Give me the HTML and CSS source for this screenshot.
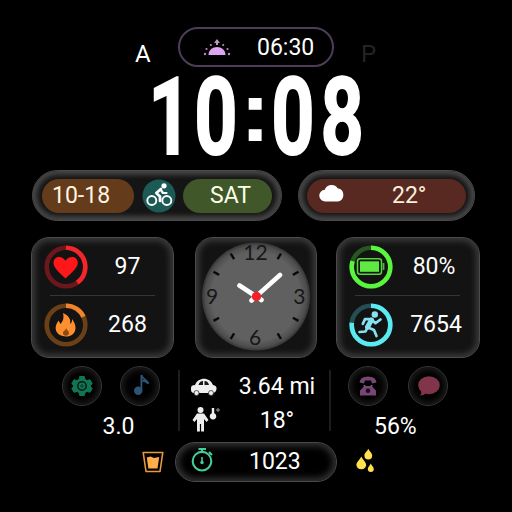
FILE: index.html
```html
<!DOCTYPE html>
<html lang="en">
<head>
<meta charset="utf-8">
<title>Watch face</title>
<link rel="stylesheet" href="styles.css">
</head>
<body>
<main class="face">
  <header class="top">
    <span class="am">A</span>
    <div class="sunrise">
      <svg class="sun" width="28" height="20" viewBox="0 0 28 20" fill="#dda4ef">
        <path d="M5.5 17C5.5 6.300 22.500 6.300 22.500 17Z"/>
        <path d="M14 1L17 5H15V7H13V5H11Z" fill="#b99abf"/>
        <g fill="#b58bc2"><circle cx="2" cy="16" r="1.2"/><circle cx="3.5" cy="11" r="1.1"/><circle cx="7.8" cy="7" r="1.1"/><circle cx="20.2" cy="7" r="1.1"/><circle cx="24.5" cy="11" r="1.1"/><circle cx="26" cy="16" r="1.2"/></g>
      </svg>
      <span>06:30</span>
    </div>
    <span class="pm">P</span>
  </header>

  <svg class="time" width="220" height="88" viewBox="146 72 220 88">
    <g class="digit">
      <text transform="translate(170 154.300) scale(.7 1)">1</text>
      <text transform="translate(216 154.300) scale(.7 1)">0</text>
      <text transform="translate(293 154.300) scale(.7 1)">0</text>
      <text transform="translate(342.200 154.300) scale(.7 1)">8</text>
    </g>
    <text class="colon" transform="translate(240 141) scale(1.060 1)">:</text>
  </svg>

  <section class="row pills">
    <div class="shell date">
      <span class="chip brown">10-18</span>
      <svg width="34" height="34" viewBox="0 0 34 34" fill="none" stroke="#fff" stroke-linecap="round" stroke-linejoin="round">
        <circle cx="17" cy="17" r="16.5" fill="#1c5b55" stroke="none"/>
        <circle cx="9.800" cy="21.500" r="4.500" stroke-width="1.900"/><circle cx="24.800" cy="21.500" r="4.500" stroke-width="1.900"/>
        <path d="M19 10L14.300 14L18 17.500V22" stroke-width="2.700"/><path d="M18.500 10.500L21 14H24.500" stroke-width="2.200"/>
        <circle cx="22" cy="6.800" r="2.600" fill="#fff" stroke="none"/>
      </svg>
      <span class="chip green">SAT</span>
    </div>
    <div class="shell weather">
      <div class="chip red">
        <svg width="26" height="20" viewBox="0 0 26 20" fill="#fff"><path d="M6.500 17.500A5.400 5.400 0 0 1 5.800 5.800A7.200 7.200 0 0 1 18.600 4.300A6.700 6.700 0 0 1 19 17.500Z"/></svg>
        <span>22°</span>
      </div>
    </div>
  </section>

  <section class="row cards">
    <div class="card">
      <div class="metric">
        <svg width="44" height="44" viewBox="0 0 44 44">
          <circle class="ring" cx="22" cy="22" r="19.3" stroke="#6b171b"/>
          <circle class="ring" cx="22" cy="22" r="19.3" pathLength="100" stroke="#f2262b" stroke-dasharray="40 60" transform="rotate(-90 22 22)"/>
          <path d="M21.5 33.5C17 29 9.5 23.5 9.5 17.8C9.5 10.7 18.5 10.2 21.5 15.8C24.5 10.2 33.8 10.7 33.8 17.8C33.8 23.5 26 29 21.5 33.5Z" fill="#fd1719"/>
        </svg>
        <span>97</span>
      </div>
      <hr>
      <div class="metric">
        <svg width="44" height="44" viewBox="0 0 44 44">
          <circle class="ring" cx="22" cy="22" r="19.3" stroke="#6b4017"/>
          <circle class="ring" cx="22" cy="22" r="19.3" pathLength="100" stroke="#f0832b" stroke-dasharray="18 82" transform="rotate(-90 22 22)"/>
          <path d="M19 10C26 13 27 18 26 21C28 20 28 18 28 16C32 21 33 27 29 31C27 33 24 33.5 22 33.5C13 33 10 27 12.5 21L14.5 17.5L16.5 21C19.5 18 20 14 19 10Z" fill="#ff8f2e"/>
          <path d="M22 25C22 27.500 18.500 28 19 30.500C19.500 33.500 25 33.500 25 30C25 28 23 27.500 22 25Z" fill="#8c4b18"/>
        </svg>
        <span>268</span>
      </div>
    </div>

    <div class="card clock">
      <svg width="122" height="121" viewBox="195 237 122 121">
        <defs><radialGradient id="dial"><stop offset=".82" stop-color="#606060"/><stop offset=".94" stop-color="#4e4e4e"/><stop offset="1" stop-color="#353535"/></radialGradient></defs>
        <circle cx="256" cy="296.5" r="54" fill="url(#dial)"/>
        <path d="M230.700 253.500l3.400 5.600M281 253.500l-3.400 5.600M213.500 271.700l5.600 3.200M298.500 271.700l-5.600 3.200M213.500 320.900l5.600-3.200M298.500 320.900l-5.600-3.200M230.700 339l3.400-5.600M281 339l-3.400-5.600" stroke="#090909" stroke-width="2.4"/>
        <g class="hours"><text x="255.500" y="259.700">12</text><text x="299.300" y="303.700">3</text><text x="255" y="344.500">6</text><text x="212.200" y="303.700">9</text></g>
        <path d="M239.500 285.500L261.500 300M280 275L251.500 300.500" stroke="#fff" stroke-width="4.600" stroke-linecap="round"/>
        <circle cx="256.500" cy="296.500" r="4.700" fill="#f32027"/>
      </svg>
    </div>

    <div class="card last">
      <div class="metric">
        <svg width="44" height="44" viewBox="0 0 44 44">
          <circle class="ring" cx="22" cy="22" r="19.3" stroke="#27561f"/>
          <circle class="ring" cx="22" cy="22" r="19.3" pathLength="100" stroke="#5af63d" stroke-dasharray="80 20" transform="rotate(-90 22 22)"/>
          <rect x="8.500" y="13.800" width="24" height="15.500" rx="2.500" fill="none" stroke="#51d637" stroke-width="1.500"/><rect x="11" y="16.300" width="19" height="10.500" fill="#61e943"/><path d="M34.500 18v7" stroke="#4cb938" stroke-width="1.800"/>
        </svg>
        <span class="battery">80%</span>
      </div>
      <hr>
      <div class="metric">
        <svg width="44" height="44" viewBox="0 0 44 44">
          <circle class="ring" cx="22" cy="22" r="19.3" stroke="#254e52"/>
          <circle class="ring" cx="22" cy="22" r="19.3" pathLength="100" stroke="#59eaf2" stroke-dasharray="77 23" transform="rotate(-90 22 22)"/>
          <g fill="none" stroke="#85e3f1" stroke-linecap="round" stroke-linejoin="round"><path d="M22.500 17L18.500 24" stroke-width="5"/><path d="M22 16L16 16.200L13.800 20.800M23 17L26.500 20.200L31.500 16.500M18.500 24.500L16.500 28.500L10.500 29M19 24.500L25 27L27.500 33" stroke-width="2.700"/></g>
          <circle cx="25.800" cy="11.500" r="3.200" fill="#85e3f1"/>
        </svg>
        <span>7654</span>
      </div>
    </div>
  </section>

  <section class="row shortcuts">
    <div class="group left">
      <div class="buttons">
        <div class="round"><svg width="24" height="24" viewBox="0 0 24 24" fill="none" stroke="#107551"><path d="M9.700 2.500h4.600l.7 3 2 1.100 3-.9 2.200 3.800-2.200 2.500 2.200 2.500-2.200 3.800-3-.9-2 1.100-.7 3H9.700L9 18.500l-2-1.100-3 .9-2.200-3.800L4 12 1.800 9.500 4 5.700l3 .9L9 5.500Z" fill="#107551"/><circle cx="12" cy="12" r="4.200" fill="#107551" stroke="#061b14" stroke-width="1.500"/><circle cx="12" cy="12" r="1.200" stroke="#0b3828"/></svg></div>
        <div class="round"><svg width="24" height="24" viewBox="0 0 24 24"><circle cx="10.200" cy="16.800" r="4.200" fill="#2c5478"/><path d="M13.400 17V1C14.500 5.500 19 5.500 20.500 9.500C17.500 6.500 15 6.500 14 6.500" fill="none" stroke="#2c5478" stroke-width="1.800"/></svg></div>
      </div>
      <span>3.0</span>
    </div>
    <div class="group middle">
      <svg width="28" height="20" viewBox="0 0 28 20"><path d="M5 8C8-.5 20-.5 23 8C27 9 27 11 26 14Q25 16 22 16H5C1 16 1 14 1 11Q1 8 5 8Z" fill="#eee"/><circle cx="6.500" cy="16" r="2.500" fill="#eee" stroke="#333" stroke-width=".8"/><circle cx="21" cy="16" r="2.500" fill="#eee" stroke="#333" stroke-width=".8"/><path d="M8.500 8Q9.500 4 13 4V8ZM14.500 4Q18 4 19 8H14.500Z" fill="#171717"/></svg>
      <span>3.64 mi</span>
      <svg class="person" width="30" height="26" viewBox="0 0 30 26" fill="#eee"><circle cx="10.500" cy="4" r="3"/><path d="M7 7.500H14L18.500 14L16.500 16L14 13V25.500H11.100V18H9.900V25.500H7V13L4.500 16L2.500 14Z"/><path d="M21.800 2h2.400v5.200a3.300 3.300 0 1 1-2.400 0Z"/><circle cx="28" cy="4" r="1.200" fill="none" stroke="#aaa"/></svg>
      <span>18°</span>
    </div>
    <div class="group right">
      <div class="buttons">
        <div class="round"><svg width="24" height="24" viewBox="0 0 24 24" fill="#764674"><path d="M3.500 8.500Q4 2.500 12 2.500T20.500 8.500L16 9.500L15 6.500H9L8 9.500Z"/><path d="M7.500 11H9.500V12H14.500V11H16.500V13L20 16.500V21.500H4V16.500L7.500 13Z"/><circle cx="12" cy="16.800" r="2.300" fill="#160e16"/></svg></div>
        <div class="round"><svg width="24" height="24" viewBox="0 0 24 24" fill="#81354a"><ellipse cx="13" cy="11.200" rx="10.800" ry="9"/><path d="M5 16.500Q6 20 3.500 21.500Q8 21.500 10 19Z"/></svg></div>
      </div>
      <span>56%</span>
    </div>
  </section>

  <footer class="row bottom">
    <svg width="22" height="24" viewBox="0 0 22 24" fill="none" stroke="#e69a3c" stroke-linejoin="round"><path d="M1.200 2.500H20.800L18 21.500H4Z" stroke-width="1.600"/><path d="M4.800 7.500L8.500 6.500L12 8L17.200 7L15.500 18.500H6.300Z" fill="#ffad48" stroke="none"/></svg>
    <div class="timer">
      <svg width="24" height="26" viewBox="0 0 24 26" fill="none" stroke="#45cc97" stroke-width="2.100"><circle cx="12" cy="13.200" r="9.300"/><path d="M8.500 1H16M12 1V4M19 4L22 7"/><path d="M12 9V14" stroke-width="1.600"/><circle cx="12" cy="14.500" r="1.700" fill="#45cc97" stroke="none"/></svg>
      <span>1023</span>
    </div>
    <svg class="drops" width="20" height="26" viewBox="0 0 20 26" fill="#ffe24e"><path d="M6.300 8.500C8 12 11.200 14 11.200 17.200A5 5 0 0 1 1.400 17.200C1.400 14 4.600 12 6.300 8.500Z"/><path d="M13.300 .8C14.600 4 17.200 5 17.200 7.500A3.900 3.900 0 0 1 9.400 7.500C9.400 5 12 4 13.300 .8Z"/><path d="M15.800 15.500C17 18 18.800 19 18.800 21A3 3 0 0 1 12.800 21C12.800 19 14.600 18 15.800 15.500Z"/></svg>
  </footer>
</main>
</body>
</html>
```

FILE: styles.css
```css
* { box-sizing: border-box; }
body { margin: 0; background: #000; }
svg { display: block; flex: none; }
.face {
  width: 512px; height: 512px; overflow: hidden;
  padding-top: 27px;
  background: #000; color: #fff;
  font: 23px/26px Roboto, "Liberation Sans", sans-serif;
  white-space: nowrap;
}
.row { display: flex; }
.top { display: flex; height: 40px; padding-left: 135px; }
.am, .pm { font-size: 24px; }
.am { width: 43px; padding-top: 14px; }
.pm { padding: 14px 0 0 27px; color: #242424; }
.sunrise {
  display: flex; align-items: center;
  width: 156px; height: 40px; padding: 2px 0 0 23px;
  border: 2px solid #4d3d58; border-radius: 20px;
}
.sunrise span { padding-left: 26px; }
.time { margin: 5px 0 0 146px; overflow: visible; }
.digit { font: 700 108px Roboto, sans-serif; fill: #fff; stroke: #fff; stroke-width: 1.8; text-anchor: middle; }
.colon { font: bold 86px "Liberation Sans", sans-serif; fill: #fff; }
.pills { margin-top: 10px; padding-left: 32px; gap: 16px; }
.shell {
  display: flex; align-items: center;
  height: 51px; padding: 0 10px;
  border-radius: 26px; background: #151515;
  border: 1px solid #4b4b4b;
  box-shadow: inset 0 0 5px 4px #464646;
}
.date { width: 250px; padding: 0 9px; justify-content: space-between; }
.weather { width: 177px; padding: 0 8px; }
.chip { height: 34px; border-radius: 17px; line-height: 34px; }
.brown { width: 92px; padding-left: 10px; background: #643c1b; color: #fff4e2; }
.green { width: 89px; padding-left: 27px; background: #40572a; color: #fbffe8; }
.red { display: flex; align-items: center; width: 159px; padding-left: 12px; background: #572920; color: #ffeddc; }
.red svg { margin-top: -3px; }
.red span { padding-left: 47px; }
.cards { margin-top: 16px; padding-left: 31px; }
.card {
  width: 143px; height: 121px; padding: 7px 0 0 12px;
  border-radius: 18px; background: #131313;
  border: 1px solid #4b4b4b;
  box-shadow: inset 0 0 6px 3px #3b3b3b;
}
.clock { width: 122px; margin: 0 19px 0 21px; padding: 0; }
.clock svg { margin: -1px; }
.metric { display: flex; align-items: center; height: 44px; }
.metric span { width: 79px; text-align: center; }
.card hr { width: 105px; height: 1px; margin: 6px 0 7px 6px; border: 0; background: #353535; }
.ring { fill: none; stroke-width: 4.6; }
.hours { font: 21px Lato, sans-serif; fill: #171717; text-anchor: middle; }
.last { width: 144px; }
.last .metric span { width: 87px; }
.last .metric .battery { width: 82px; }
.shortcuts { margin-top: 8px; height: 76px; padding-left: 62px; }
.buttons { display: flex; gap: 18px; }
.round {
  display: grid; place-items: center;
  width: 40px; height: 40px;
  border: 1px solid #353535; border-radius: 50%;
  box-shadow: inset 0 0 7px 2px #202020;
}
.group > span { display: block; }
.left { width: 116px; }
.left > span { width: 113px; margin-top: 8px; text-align: center; }
.middle {
  display: grid; grid-template-columns: 32px 110px; grid-template-rows: 33px 36px;
  align-items: center; width: 153px; height: 61px;
  margin-top: 4px; padding-left: 10px;
  border: solid #1d1d1d; border-width: 0 2px;
}
.middle span { text-align: center; }
.person { margin-top: -5px; }
.right { margin-left: 17px; }
.right .buttons { gap: 20px; }
.right > span { margin: 8px 0 0 26px; }
.bottom { align-items: center; height: 40px; padding-left: 142px; }
.timer {
  display: flex; align-items: center;
  width: 162px; height: 40px; margin: 0 18px 0 11px; padding-left: 14px;
  border: 1px solid #494949; border-radius: 20px;
  box-shadow: inset 0 0 7px 3px #343434;
}
.timer svg { margin-top: -2px; }
.timer span { padding-left: 35px; }
.drops { margin-top: -2px; }
```
